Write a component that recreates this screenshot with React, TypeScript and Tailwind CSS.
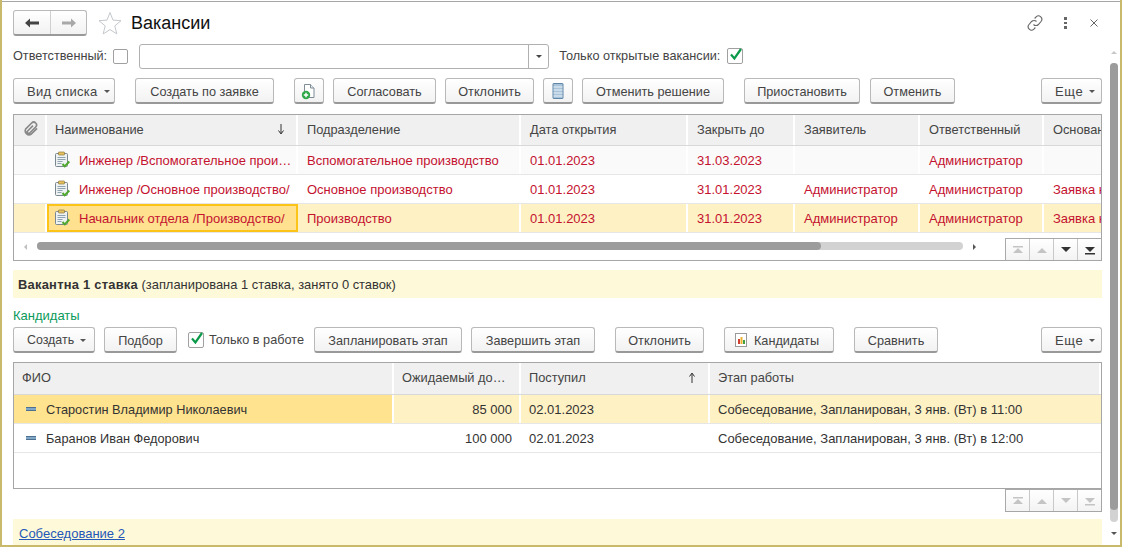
import type { ReactNode } from "react"

const font = { fontFamily: '"Liberation Sans", Arial, sans-serif' }

function Btn({ w, ml, children, menu }: { w: string; ml?: string; children: ReactNode; menu?: boolean }) {
  return (
    <div
      className={`${w} ${ml ?? ""} h-[26px] shrink-0 flex items-center rounded-[3px] border border-[#b9b9b9] border-b-[#999] border-b-2 bg-gradient-to-b from-white to-[#f2f2f2] text-[12.7px] text-[#444] ${
        menu ? "pt-[1px] justify-start pl-[13px] gap-[6px]" : "pt-[3px] justify-center gap-[5px]"
      }`}
    >
      {children}
      {menu && <span className="w-0 h-0 mt-[1px] border-x-[3px] border-x-transparent border-t-[3px] border-t-[#555]" />}
    </div>
  )
}

function ClipIcon() {
  return (
    <svg width="18" height="18" viewBox="0 0 18 18" className="shrink-0">
      <rect x="2.500" y="2.500" width="12" height="13" rx="1" fill="#eef2f2" stroke="#7a8790" />
      <rect x="5.500" y="1" width="6" height="3" rx="0.500" fill="#e8c25c" stroke="#8a7a40" strokeWidth="0.700" />
      <path d="M4.500 6.500h8M4.500 8.500h8M4.500 10.500h5M4.500 12.500h4" stroke="#8fa3b0" strokeWidth="1" />
      <path d="M9.500 13l2.200 2.400 4.600-4.900" fill="none" stroke="#4ea82c" strokeWidth="2" />
    </svg>
  )
}

function DashIcon() {
  return <span className="w-[10px] h-[4px] shrink-0 bg-[#7fa8c8] border-y border-[#4f6f8f]" />
}

function Nav({ up, down }: { up: boolean; down: boolean }) {
  const on = "#333"
  const off = "#c4c4c4"
  return (
    <div className="flex h-[22px] border-l border-t border-[#a9a9a9]">
      {[0, 1, 2, 3].map((i) => {
        const c = i < 2 ? (up ? on : off) : down ? on : off
        return (
          <div key={i} className="w-[24px] last:w-[23px] flex items-center justify-center border-r border-[#c8c8c8] last:border-r-0 bg-gradient-to-b from-white to-[#f3f3f3]">
            <svg width="14" height="10" viewBox="0 0 14 10">
              {i === 0 && <rect x="2" y="1" width="10" height="1.500" fill={c} />}
              {i < 2 && <path d="M7 3L12 8H2z" fill={c} />}
              {i >= 2 && <path d="M2 2h10L7 7z" fill={c} />}
              {i === 3 && <rect x="2" y="8" width="10" height="1.500" fill={c} />}
            </svg>
          </div>
        )
      })}
    </div>
  )
}

const topCols = ["w-[33px]", "w-[251px]", "w-[223px]", "w-[167px]", "w-[107px]", "w-[125px]", "w-[124px]", "w-[57px]"]
const topHead = ["", "Наименование", "Подразделение", "Дата открытия", "Закрыть до", "Заявитель", "Ответственный", "Основание"]
const topRows = [
  ["Инженер /Вспомогательное прои…", "Вспомогательное производство", "01.01.2023", "31.03.2023", "", "Администратор", ""],
  ["Инженер /Основное производство/", "Основное производство", "01.01.2023", "31.01.2023", "Администратор", "Администратор", "Заявка на подбор"],
  ["Начальник отдела /Производство/", "Производство", "01.01.2023", "31.01.2023", "Администратор", "Администратор", "Заявка на подбор"],
]

const botCols = ["w-[380px]", "w-[127px]", "w-[189px]", "flex-1"]
const botRows = [
  ["Старостин Владимир Николаевич", "85 000", "02.01.2023", "Собеседование, Запланирован, 3 янв. (Вт) в 11:00"],
  ["Баранов Иван Федорович", "100 000", "02.01.2023", "Собеседование, Запланирован, 3 янв. (Вт) в 12:00"],
]

function Check({ className }: { className?: string }) {
  return (
    <span className={`relative w-[16px] h-[16px] shrink-0 rounded-[2px] border border-[#a0a0a0] bg-white ${className ?? ""}`}>
      <svg width="16" height="16" viewBox="0 0 16 16" className="absolute left-0 -top-[2px]">
        <path d="M3 7.500l3.400 4L13 2" fill="none" stroke="#0b9a4a" strokeWidth="2.200" />
      </svg>
    </span>
  )
}

export default function App() {
  return (
    <div style={font} className="w-[1122px] h-[547px] overflow-hidden flex flex-col bg-white text-[13px] leading-[15px] text-[#444] border-l-2 border-r-2 border-b-2 border-[#c8b96b] border-t-0">
      <div className="h-[2px] shrink-0 border-b border-[#a6a6a6]" />
      <div className="flex flex-1 min-h-0">
        <div className="w-[1100px] pl-[11px] flex flex-col shrink-0">
          {/* title */}
          <div className="h-[26px] mt-[8px] flex items-center shrink-0">
            <div className="w-[74px] h-[26px] flex rounded-[3px] border border-[#b9b9b9] border-b-[#999] border-b-2 bg-gradient-to-b from-white to-[#f2f2f2]">
              <div className="w-[37px] flex items-center justify-center border-r border-[#d0d0d0]">
                <svg width="16" height="12" viewBox="0 0 16 12"><path d="M1 6l5-4.500V4.500h9v3H6v3z" fill="#444" /></svg>
              </div>
              <div className="flex-1 flex items-center justify-center">
                <svg width="16" height="12" viewBox="0 0 16 12"><path d="M15 6l-5-4.500V4.500H1v3h9v3z" fill="#a8a8a8" /></svg>
              </div>
            </div>
            <svg width="26" height="26" viewBox="0 0 26 26" className="ml-[10px]">
              <path d="M13 2.500l3 7.600 8 .6-6.200 5.200 2 8L13 19.600 6.200 23.900l2-8L2 10.700l8-.6z" fill="#fff" stroke="#c4c8cc" strokeWidth="1" />
            </svg>
            <span className="ml-[8px] text-[18px] leading-[24px] text-[#111]">Вакансии</span>
            <div className="ml-auto flex items-center mr-[1px]">
              <svg width="18" height="18" viewBox="0 0 24 24" fill="none" stroke="#666" strokeWidth="1.500" className="mr-[20px]">
                <path d="M10 14a4.500 4.500 0 0 0 6.500 0l3.500-4a4.500 4.500 0 0 0-6.500-6.200L11.500 6" />
                <path d="M14 10a4.500 4.500 0 0 0-6.500 0l-3.500 4a4.500 4.500 0 0 0 6.500 6.200l2-2.200" />
              </svg>
              <div className="flex flex-col gap-[2px] mr-[22px]">
                <span className="w-[3px] h-[2.500px] bg-[#666]" />
                <span className="w-[3px] h-[2.500px] bg-[#666]" />
                <span className="w-[3px] h-[2.500px] bg-[#666]" />
              </div>
              <svg width="10" height="10" viewBox="0 0 10 10" className="mr-[2px]">
                <path d="M1.500 1.500l7 7M8.500 1.500l-7 7" stroke="#666" strokeWidth="1" />
              </svg>
            </div>
          </div>

          {/* filter */}
          <div className="h-[26px] mt-[7px] flex items-center shrink-0 text-[12.7px]">
            <span>Ответственный:</span>
            <span className="ml-[6px] w-[15px] h-[15px] rounded-[2px] border border-[#a0a0a0]" />
            <div className="ml-[11px] w-[410px] h-[25px] flex justify-end rounded-[3px] border border-[#b0b0b0]">
              <div className="w-[20px] flex items-center justify-center border-l border-[#b0b0b0]">
                <span className="w-0 h-0 border-x-[3px] border-x-transparent border-t-[3px] border-t-[#444]" />
              </div>
            </div>
            <span className="ml-[10px]">Только открытые вакансии:</span>
            <Check className="ml-[7px]" />
          </div>

          {/* toolbar */}
          <div className="mt-[9px] flex shrink-0">
            <Btn w="w-[102px]" menu><span className="text-[13px] tracking-[0.3px]">Вид списка</span></Btn>
            <Btn w="w-[139px]" ml="ml-[20px]">Создать по заявке</Btn>
            <Btn w="w-[30px]" ml="ml-[20px]">
              <svg width="18" height="18" viewBox="0 0 18 18" className="-mt-[2px]">
                <path d="M4.500 2.500h6l3.500 3.500v9.500h-9.500z" fill="#fff" stroke="#7f8c96" />
                <path d="M10.500 2.500v3.500h3.500" fill="#e6ebee" stroke="#7f8c96" />
                <circle cx="6" cy="13" r="4.200" fill="#2fa84a" />
                <path d="M3.800 13h4.400M6 10.800v4.400" stroke="#fff" strokeWidth="1.400" />
              </svg>
            </Btn>
            <Btn w="w-[103px]" ml="ml-[9px]">Согласовать</Btn>
            <Btn w="w-[89px]" ml="ml-[9px]">Отклонить</Btn>
            <Btn w="w-[30px]" ml="ml-[9px]">
              <svg width="12" height="16" viewBox="0 0 12 16" className="-mt-[2px]">
                <rect x="1" y="0.500" width="10" height="15" rx="0.500" fill="#a9c4da" stroke="#5f86a8" />
                <path d="M1.500 4h9M1.500 7h9M1.500 10h9M1.500 13h9" stroke="#e8f0f6" strokeWidth="1" />
              </svg>
            </Btn>
            <Btn w="w-[142px]" ml="ml-[9px]">Отменить решение</Btn>
            <Btn w="w-[116px]" ml="ml-[20px]">Приостановить</Btn>
            <Btn w="w-[85px]" ml="ml-[10px]">Отменить</Btn>
            <Btn w="w-[61px]" ml="ml-[86px]" menu><span className="text-[13px] tracking-[0.6px]">Еще</span></Btn>
          </div>

          {/* vacancies */}
          <div className="mt-[10px] h-[147px] shrink-0 flex flex-col overflow-hidden border border-[#a6a6a6]">
            <div className="flex h-[31px] shrink-0 border-b border-[#d8d8d8] text-[12.8px]">
              {topHead.map((h, i) => (
                <div key={i} className={`${topCols[i]} shrink-0 flex items-center whitespace-nowrap overflow-hidden pb-[2px] bg-[#f0f0f0] ${i === 7 ? "" : "border-r-2 border-white"} ${i === 1 ? "pl-[8px]" : "pl-[9px]"}`}>
                  {i === 0 && (
                    <svg width="16" height="16" viewBox="0 0 24 24" fill="none" stroke="#888" strokeWidth="2.500">
                      <path d="M21 11l-9 9a6 6 0 0 1-8-8l9-9a4 4 0 0 1 6 6l-9 9a2 2 0 0 1-3-3l8-8" />
                    </svg>
                  )}
                  {h}
                  {i === 1 && (
                    <svg width="8" height="11" viewBox="0 0 8 11" className="ml-auto mr-[11px]">
                      <path d="M4 0v9M1.500 6.500L4 10l2.500-3.500" fill="none" stroke="#333" />
                    </svg>
                  )}
                </div>
              ))}
            </div>
            {topRows.map((r, ri) => (
              <div key={ri} className={`flex h-[29px] shrink-0 border-b border-[#e6e6e6] text-[#c4122f] ${ri === 0 ? "bg-[#fafafa]" : ""} ${ri === 2 ? "bg-[#fef1c4]" : ""}`}>
                <div className={`${topCols[0]} shrink-0 border-r-2 border-white`} />
                {r.map((c, i) => (
                  <div
                    key={i}
                    className={`${topCols[i + 1]} shrink-0 flex items-center whitespace-nowrap overflow-hidden ${
                      i === 0 && ri === 2
                        ? "bg-[#ffe18f] border-2 border-[#fcc419] pl-[6px]"
                        : i === 0
                          ? "pl-[8px] border-r-2 border-white"
                          : i === 6
                            ? "pl-[9px]"
                            : "pl-[9px] border-r-2 border-white"
                    }`}
                  >
                    {i === 0 && <span className="-ml-[2px] mr-[8px] flex"><ClipIcon /></span>}
                    {c}
                  </div>
                ))}
              </div>
            ))}
            <div className="flex-1 flex items-center relative">
              <span className="ml-[10px] w-0 h-0 border-y-[3px] border-y-transparent border-r-[3px] border-r-[#c0c0c0]" />
              <div className="ml-[10px] w-[926px] h-[8px] mt-[-2px] rounded-[4px] bg-[#d2d2d2]">
                <div className="w-[784px] h-full rounded-[4px] bg-[#9c9c9c]" />
              </div>
              <span className="ml-[10px] w-0 h-0 border-y-[3px] border-y-transparent border-l-[3px] border-l-[#555]" />
              <div className="absolute right-0 bottom-0">
                <Nav up={false} down />
              </div>
            </div>
          </div>

          {/* status */}
          <div className="mt-[9px] h-[28px] shrink-0 pl-[5px] flex items-center bg-[#fef9d9] text-[#333] text-[12.900px]">
            <b className="text-[#333] tracking-[0.25px]">Вакантна 1 ставка</b>&nbsp;(запланирована 1 ставка, занято 0 ставок)
          </div>

          <div className="mt-[10px] h-[15px] shrink-0 text-[#0a9a5a]">Кандидаты</div>

          {/* candidates toolbar */}
          <div className="mt-[4px] flex items-center shrink-0">
            <Btn w="w-[82px]" menu><span className="pt-[1px] text-[12.400px]">Создать</span></Btn>
            <Btn w="w-[73px]" ml="ml-[9px]">Подбор</Btn>
            <Check className="ml-[11px]" />
            <span className="ml-[5px] w-[95px] whitespace-nowrap text-[12.7px]">Только в работе</span>
            <Btn w="w-[148px]" ml="ml-[10px]">Запланировать этап</Btn>
            <Btn w="w-[124px]" ml="ml-[9px]">Завершить этап</Btn>
            <Btn w="w-[89px]" ml="ml-[20px]">Отклонить</Btn>
            <Btn w="w-[110px] pr-[6px]" ml="ml-[20px]">
              <svg width="16" height="16" viewBox="0 0 16 16" className="-mt-[2px]">
                <rect x="2.500" y="1.500" width="11" height="13" fill="#fff" stroke="#9a9a9a" />
                <rect x="5" y="7" width="2" height="5" fill="#d04030" />
                <rect x="7.500" y="5" width="2" height="7" fill="#f0b030" />
                <rect x="10" y="8" width="2" height="4" fill="#40a040" />
              </svg>
              Кандидаты
            </Btn>
            <Btn w="w-[84px]" ml="ml-[20px]">Сравнить</Btn>
            <Btn w="w-[61px]" ml="ml-auto" menu><span className="text-[13px] tracking-[0.6px]">Еще</span></Btn>
          </div>

          {/* candidates */}
          <div className="mt-[9px] h-[127px] shrink-0 flex flex-col overflow-hidden border border-[#a6a6a6]">
            <div className="flex h-[32px] shrink-0 border-b border-[#d8d8d8] text-[12.8px]">
              {["ФИО", "Ожидаемый до…", "Поступил", "Этап работы"].map((h, i) => (
                <div key={i} className={`${botCols[i]} shrink-0 flex items-center whitespace-nowrap overflow-hidden pl-[8px] pb-[2px] bg-[#f0f0f0] border-r-2 border-white`}>
                  {h}
                  {i === 2 && (
                    <svg width="8" height="11" viewBox="0 0 8 11" className="ml-auto mr-[12px]">
                      <path d="M4 11V2M1.500 4.500L4 1l2.500 3.500" fill="none" stroke="#333" />
                    </svg>
                  )}
                </div>
              ))}
            </div>
            {botRows.map((r, ri) => (
              <div key={ri} className={`flex h-[29px] shrink-0 border-b border-[#e6e6e6] text-[#333] ${ri === 0 ? "bg-[#fef1c4]" : ""}`}>
                {r.map((c, i) => (
                  <div
                    key={i}
                    className={`${botCols[i]} shrink-0 flex items-center whitespace-nowrap overflow-hidden pl-[8px] ${i === 3 ? "" : "border-r-2 border-white"} ${
                      i === 1 ? "justify-end pr-[7px]" : ""
                    } ${i === 0 ? "text-[12.750px]" : ""} ${i === 0 && ri === 0 ? "bg-[#ffe38f]" : ""}`}
                  >
                    {i === 0 && <span className="ml-[4px] mr-[10px] flex"><DashIcon /></span>}
                    {c}
                  </div>
                ))}
              </div>
            ))}
          </div>
          <div className="flex justify-end shrink-0">
            <div className="border-r border-b border-[#a6a6a6]">
              <Nav up={false} down={false} />
            </div>
          </div>

          <div className="mt-[7px] flex-1 pl-[6px] pt-[2px] flex items-center bg-[#fef9d9]">
            <span className="text-[#2458b8] underline">Собеседование 2</span>
          </div>
        </div>

        {/* page scroll */}
        <div className="flex-1 pl-[5px] flex flex-col items-center pt-[49px] pb-[6px]">
          <span className="w-0 h-0 border-x-[3px] border-x-transparent border-b-[3px] border-b-[#c8c8c8]" />
          <div className="mt-[9px] w-[8px] h-[459px] rounded-[4px] bg-[#d2d2d2]">
            <div className="w-full h-[447px] rounded-[4px] bg-[#9c9c9c]" />
          </div>
          <span className="mt-[10px] w-0 h-0 border-x-[3px] border-x-transparent border-t-[3px] border-t-[#555]" />
        </div>
      </div>
    </div>
  )
}
